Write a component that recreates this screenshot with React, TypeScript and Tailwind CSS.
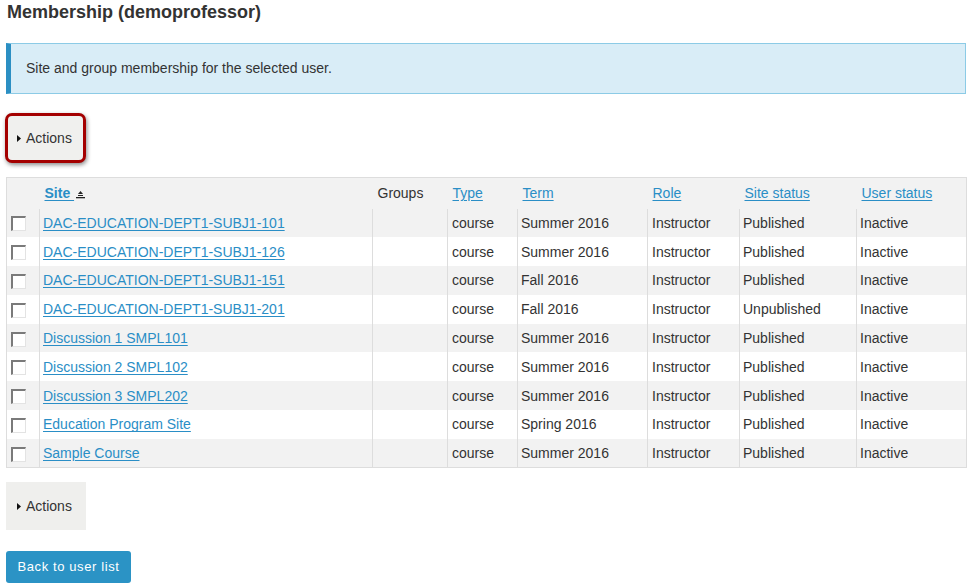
import React from "react";

const rows = [
  ["DAC-EDUCATION-DEPT1-SUBJ1-101", "course", "Summer 2016", "Instructor", "Published", "Inactive"],
  ["DAC-EDUCATION-DEPT1-SUBJ1-126", "course", "Summer 2016", "Instructor", "Published", "Inactive"],
  ["DAC-EDUCATION-DEPT1-SUBJ1-151", "course", "Fall 2016", "Instructor", "Published", "Inactive"],
  ["DAC-EDUCATION-DEPT1-SUBJ1-201", "course", "Fall 2016", "Instructor", "Unpublished", "Inactive"],
  ["Discussion 1 SMPL101", "course", "Summer 2016", "Instructor", "Published", "Inactive"],
  ["Discussion 2 SMPL102", "course", "Summer 2016", "Instructor", "Published", "Inactive"],
  ["Discussion 3 SMPL202", "course", "Summer 2016", "Instructor", "Published", "Inactive"],
  ["Education Program Site", "course", "Spring 2016", "Instructor", "Published", "Inactive"],
  ["Sample Course", "course", "Summer 2016", "Instructor", "Published", "Inactive"],
];

function Tri() {
  return (
    <svg width="4" height="7" viewBox="0 0 4 7" className="mr-[5px]">
      <path d="M0 0 L4 3.5 L0 7 Z" fill="#111" />
    </svg>
  );
}

function SortIcon() {
  return (
    <svg width="9" height="8" viewBox="0 0 9 8" className="inline-block ml-[2px] align-[-1px]">
      <path d="M4.5 0 L7 3 L2 3 Z" fill="#222" />
      <rect x="2" y="4" width="5" height="1" fill="#222" />
      <rect x="0" y="6" width="9" height="1.3" fill="#222" />
    </svg>
  );
}

function Checkbox() {
  return (
    <div className="w-[15px] h-[15px] bg-white border-t-2 border-l-2 border-t-[#7a7a7a] border-l-[#7a7a7a] border-b border-r border-b-[#e3e3e3] border-r-[#e3e3e3]" />
  );
}

export default function App() {
  const link = "text-[#2a8ec6] underline underline-offset-2";
  return (
    <div
      className="w-[973px] h-[588px] bg-white text-[#333] text-[14px] pl-[6px] pr-[7px] overflow-hidden"
      style={{ fontFamily: '"Liberation Sans", Arial, sans-serif' }}
    >
      <h1 className="text-[18px] font-bold leading-[22px] pt-[1px] pl-[1px] text-[#333]">
        Membership (demoprofessor)
      </h1>

      <div className="mt-[20px] h-[51px] bg-[#d9edf7] border border-[#8ccbe6] border-l-[5px] border-l-[#2b8fc3] flex items-center pl-[15px]">
        Site and group membership for the selected user.
      </div>

      <div className="mt-[19px] ml-[-1px] w-[81px] h-[50px] rounded-[7px] border-[3px] border-[#a40000] shadow-[1px_2px_4px_rgba(0,0,0,0.45)] bg-[#f0f0ee] flex items-center pl-[9px]">
        <Tri />
        <span>Actions</span>
      </div>

      <table className="mt-[14px] w-[960px] border-collapse table-fixed border border-[#dddddd]">
        <colgroup>
          <col className="w-[33px]" />
          <col className="w-[333px]" />
          <col className="w-[75px]" />
          <col className="w-[70px]" />
          <col className="w-[130px]" />
          <col className="w-[92px]" />
          <col className="w-[117px]" />
          <col className="w-[110px]" />
        </colgroup>
        <thead>
          <tr className="bg-[#f2f2f2] h-[31px] text-left">
            <th />
            <th className="font-bold px-[5px] pt-[1px]">
              <span className={link + " font-bold"}>Site&nbsp;</span>
              <SortIcon />
            </th>
            <th className="font-normal px-[5px] pt-[1px]">Groups</th>
            <th className="font-normal px-[5px] pt-[1px]"><span className={link}>Type</span></th>
            <th className="font-normal px-[5px] pt-[1px]"><span className={link}>Term</span></th>
            <th className="font-normal px-[5px] pt-[1px]"><span className={link}>Role</span></th>
            <th className="font-normal px-[5px] pt-[1px]"><span className={link}>Site status</span></th>
            <th className="font-normal px-[5px] pt-[1px]"><span className={link}>User status</span></th>
          </tr>
        </thead>
        <tbody>
          {rows.map((r, i) => (
            <tr key={i} className={(i % 2 === 0 ? "bg-[#f2f2f2]" : "bg-white") + " h-[28.8px]"}>
              <td className="pl-[4px] pt-[2px] align-middle"><Checkbox /></td>
              <td className="border-l border-[#dddddd] pl-[3px] pt-[1px] whitespace-nowrap"><span className={link}>{r[0]}</span></td>
              <td className="border-l border-[#dddddd]" />
              <td className="border-l border-[#dddddd] pl-[4px] pt-[1px]">{r[1]}</td>
              <td className="border-l border-[#dddddd] pl-[3px] pt-[1px]">{r[2]}</td>
              <td className="border-l border-[#dddddd] pl-[4px] pt-[1px]">{r[3]}</td>
              <td className="border-l border-[#dddddd] pl-[3px] pt-[1px]">{r[4]}</td>
              <td className="border-l border-[#dddddd] pl-[3px] pt-[1px]">{r[5]}</td>
            </tr>
          ))}
        </tbody>
      </table>

      <div className="mt-[14px] w-[80px] h-[48px] bg-[#efefed] flex items-center pl-[11px]">
        <Tri />
        <span>Actions</span>
      </div>

      <button className="mt-[21px] w-[125px] h-[32px] rounded-[3px] bg-[#2b93c5] text-white text-[13px] tracking-[0.6px] flex items-center justify-center">
        Back to user list
      </button>
    </div>
  );
}
